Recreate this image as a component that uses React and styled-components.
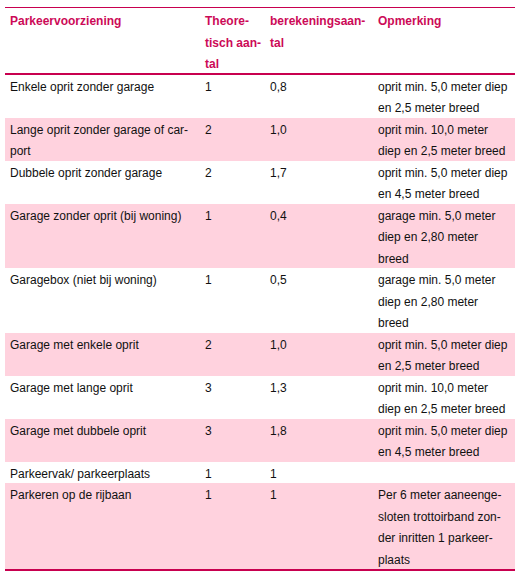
import React from 'react';
import styled, { createGlobalStyle } from 'styled-components';

const GlobalStyle = createGlobalStyle`
  body {
    margin: 0;
    background: #ffffff;
    font-family: "Liberation Sans", Arial, sans-serif;
  }
`;

const Page = styled.div`
  padding: 7px 5px 4px 5px;
`;

// tabel
const Table = styled.div`
  width: 510px;
  border-top: 1px solid #c8004f;
  border-bottom: 2px solid #c8004f;
`;

const columns = '195px 65px 108px 142px';

const HeaderRow = styled.div`
  display: grid;
  grid-template-columns: ${columns};
  border-bottom: 2px solid #c8004f;
`;

// tekst zit iets lager in de regel, de negatieve marge houdt de rijhoogte gelijk
const HeadCell = styled.div`
  padding: 3px 0 0 5px;
  margin-bottom: -3px;
  font-size: 12px;
  line-height: 21.5px;
  font-weight: bold;
  color: #cc0a57;
`;

const Row = styled.div`
  display: grid;
  grid-template-columns: ${columns};
  background: ${(p) => (p.$shade ? '#ffd2de' : '#ffffff')};
`;

const Cell = styled.div`
  padding: 2px 0 0 5px;
  margin-bottom: -2px;
  font-size: 12px;
  line-height: 21.5px;
  color: #111111;
  white-space: nowrap;
`;

const Lines = ({ lines }) =>
  lines.map((l, i) => (
    <React.Fragment key={i}>
      {i > 0 && <br />}
      {l}
    </React.Fragment>
  ));

const rows = [
  [['Enkele oprit zonder garage'], '1', '0,8', ['oprit min. 5,0 meter diep', 'en 2,5 meter breed']],
  [['Lange oprit zonder garage of car-', 'port'], '2', '1,0', ['oprit min. 10,0 meter', 'diep en 2,5 meter breed']],
  [['Dubbele oprit zonder garage'], '2', '1,7', ['oprit min. 5,0 meter diep', 'en 4,5 meter breed']],
  [['Garage zonder oprit (bij woning)'], '1', '0,4', ['garage min. 5,0 meter', 'diep en 2,80 meter', 'breed']],
  [['Garagebox (niet bij woning)'], '1', '0,5', ['garage min. 5,0 meter', 'diep en 2,80 meter', 'breed']],
  [['Garage met enkele oprit'], '2', '1,0', ['oprit min. 5,0 meter diep', 'en 2,5 meter breed']],
  [['Garage met lange oprit'], '3', '1,3', ['oprit min. 10,0 meter', 'diep en 2,5 meter breed']],
  [['Garage met dubbele oprit'], '3', '1,8', ['oprit min. 5,0 meter diep', 'en 4,5 meter breed']],
  [['Parkeervak/ parkeerplaats'], '1', '1', []],
  [['Parkeren op de rijbaan'], '1', '1', ['Per 6 meter aaneenge-', 'sloten trottoirband zon-', 'der inritten 1 parkeer-', 'plaats']],
];

export default function App() {
  return (
    <Page>
      <GlobalStyle />
      <Table>
        <HeaderRow>
          <HeadCell>Parkeervoorziening</HeadCell>
          <HeadCell>
            <Lines lines={['Theore-', 'tisch aan-', 'tal']} />
          </HeadCell>
          <HeadCell>
            <Lines lines={['berekeningsaan-', 'tal']} />
          </HeadCell>
          <HeadCell>Opmerking</HeadCell>
        </HeaderRow>
        {rows.map(([name, theo, calc, note], i) => (
          <Row key={i} $shade={i % 2 === 1}>
            <Cell>
              <Lines lines={name} />
            </Cell>
            <Cell>{theo}</Cell>
            <Cell>{calc}</Cell>
            <Cell>
              <Lines lines={note} />
            </Cell>
          </Row>
        ))}
      </Table>
    </Page>
  );
}
